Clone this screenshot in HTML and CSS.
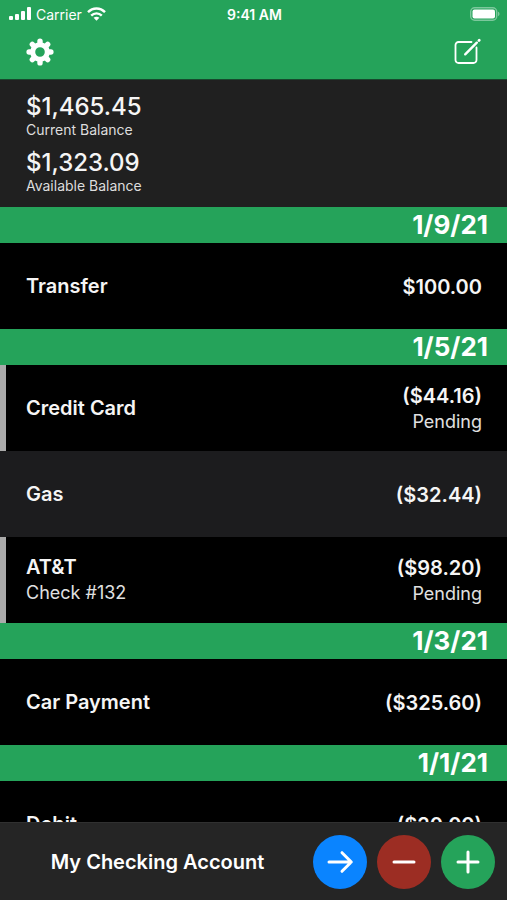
FILE: index.html
```html
<!DOCTYPE html>
<html lang="en">
<head>
    <meta charset="UTF-8">
    <meta name="viewport" content="width=device-width, initial-scale=1.0">
    <title>My Checking Account</title>
    <link rel="stylesheet" href="styles.css">
</head>
<body>
    <!-- Header -->
    <header class="header">
        <div class="status-bar">
            <div class="carrier">
                <svg width="22" height="14" viewBox="0 0 22 14" fill="#fff" aria-hidden="true">
                    <rect x="0" y="9" width="4" height="4" rx="1"/>
                    <rect x="6" y="7" width="4" height="6" rx="1"/>
                    <rect x="12" y="4" width="4" height="9" rx="1"/>
                    <rect x="18" y="0" width="4" height="13" rx="1"/>
                </svg>
                <span>Carrier</span>
                <svg width="19" height="14" viewBox="0 0 19 14" fill="none" stroke="#fff" stroke-width="2.4" aria-hidden="true">
                    <path d="M1 5.2C5.8.2 13.2.2 18 5.2"/>
                    <path d="M4.2 8.6c3-3 7.600-3 10.600 0"/>
                    <path d="M9.500 13.700L6.600 10.800c1.700-1.500 4.100-1.500 5.800 0z" fill="#fff" stroke="none"/>
                </svg>
            </div>
            <div class="time">9:41 AM</div>
            <div class="battery">
                <svg width="30" height="14" viewBox="0 0 30 14" aria-hidden="true">
                    <rect x="0.700" y="0.700" width="26" height="12.600" rx="4" fill="none" stroke="#fff" stroke-opacity="0.400" stroke-width="1.400"/>
                    <rect x="2.500" y="2.500" width="22.500" height="9" rx="2" fill="#fff"/>
                    <path d="M28 4.800c2 .6 2 3.800 0 4.400z" fill="#fff" fill-opacity="0.400"/>
                </svg>
            </div>
        </div>
        <div class="toolbar">
            <button class="icon-btn" aria-label="Settings">
                <svg width="28" height="28" viewBox="-14 -14 28 28" aria-hidden="true">
                    <g fill="none" stroke="#fff" stroke-width="5.400" stroke-linecap="round">
                        <path d="M0-10.900V-8M0 8v2.900M-10.900 0H-8M8 0h2.900"/>
                        <path d="M-7.700-7.700l2 2M5.700 5.700l2 2M7.700-7.700l-2 2M-5.700 5.700l-2 2"/>
                    </g>
                    <circle r="7.300" fill="none" stroke="#fff" stroke-width="5"/>
                </svg>
            </button>
            <button class="icon-btn" aria-label="New transaction">
                <svg width="28" height="28" viewBox="0 0 28 28" fill="none" stroke="#fff" stroke-width="1.800" stroke-linecap="round" aria-hidden="true">
                    <path d="M18.500 4H5.500a3 3 0 0 0-3 3v15a3 3 0 0 0 3 3h15a3 3 0 0 0 3-3V9.500"/>
                    <path d="M12.200 16.300L23.800 4.700" stroke-width="2.400"/>
                    <path d="M26 2.500l.2-.2" stroke-width="2.800"/>
                </svg>
            </button>
        </div>
    </header>

    <!-- Balances -->
    <section class="balances">
        <div class="balance">$1,465.45</div>
        <div class="balance-label">Current Balance</div>
        <div class="balance">$1,323.09</div>
        <div class="balance-label">Available Balance</div>
    </section>

    <!-- Transactions -->
    <main class="transactions">
        <h2 class="date">1/9/21</h2>
        <div class="transaction">
            <div class="name">Transfer</div>
            <div class="amount">$100.00</div>
        </div>

        <h2 class="date">1/5/21</h2>
        <div class="transaction pending">
            <div class="name">Credit Card</div>
            <div class="amount">($44.16)<div class="note">Pending</div></div>
        </div>
        <div class="transaction alt">
            <div class="name">Gas</div>
            <div class="amount">($32.44)</div>
        </div>
        <div class="transaction pending">
            <div class="name">AT&amp;T<div class="note">Check #132</div></div>
            <div class="amount">($98.20)<div class="note">Pending</div></div>
        </div>

        <h2 class="date">1/3/21</h2>
        <div class="transaction">
            <div class="name">Car Payment</div>
            <div class="amount">($325.60)</div>
        </div>

        <h2 class="date">1/1/21</h2>
        <div class="transaction">
            <div class="name">Debit</div>
            <div class="amount">($20.00)</div>
        </div>
    </main>

    <!-- Footer -->
    <footer class="footer">
        <div class="account">My Checking Account</div>
        <button class="round-btn transfer" aria-label="Transfer">
            <svg width="28" height="28" viewBox="0 0 28 28" aria-hidden="true">
                <path d="M3 14h22M16 4.700l9.300 9.300-9.300 9.300"/>
            </svg>
        </button>
        <button class="round-btn withdraw" aria-label="Withdraw">
            <svg width="28" height="28" viewBox="0 0 28 28" aria-hidden="true">
                <path d="M4 14h20"/>
            </svg>
        </button>
        <button class="round-btn deposit" aria-label="Deposit">
            <svg width="28" height="28" viewBox="0 0 28 28" aria-hidden="true">
                <path d="M4 14h20M14 4v20"/>
            </svg>
        </button>
    </footer>
</body>
</html>
```
FILE: styles.css
```css
/* Global Reset */
* {
    margin: 0;
    padding: 0;
    box-sizing: border-box;
}

body {
    height: 100vh;
    display: flex;
    flex-direction: column;
    overflow: hidden;
    font-family: 'Inter', sans-serif;
    background-color: #000;
    color: #fff;
}

button {
    border: none;
    background: none;
    cursor: pointer;
}

svg {
    display: block;
}

/* Header */
.header {
    flex: none;
    background-color: #25a35a;
    border-bottom: 1px solid #17492d;
}

.status-bar {
    display: grid;
    grid-template-columns: 1fr auto 1fr;
    align-items: center;
    height: 28px;
    padding: 0 7px 0 9px;
    font-size: 14px;
}

.carrier {
    display: flex;
    align-items: center;
    gap: 5px;
}

.time {
    font-weight: 600;
}

.battery {
    justify-self: end;
}

.toolbar {
    display: flex;
    justify-content: space-between;
    padding: 10px 26px 13px;
}

/* Balances */
.balances {
    flex: none;
    padding: 13px 26px 2px;
    background-color: #202020;
}

.balance {
    font-size: 24px;
    font-weight: 500;
    line-height: 28px;
    color: #f5f5f5;
}

.balance-label {
    font-size: 14px;
    line-height: 18px;
    margin-bottom: 10px;
    color: #ddd;
}

/* Transactions */
.transactions {
    flex: 1;
    min-height: 0;
    overflow: hidden;
}

.date {
    padding-right: 19px;
    font-size: 26px;
    font-weight: 700;
    line-height: 36px;
    text-align: right;
    background-color: #25a35a;
}

.transaction {
    display: flex;
    justify-content: space-between;
    align-items: center;
    height: 86px;
    padding: 0 25px 0 20px;
    border-left: 6px solid transparent;
    font-size: 20px;
    font-weight: 600;
    line-height: 26px;
    color: #f5f5f5;
}

.transaction.alt {
    background-color: #1c1c1e;
}

.transaction.pending {
    border-left-color: #aaa;
}

.amount {
    padding-top: 2px;
    text-align: right;
}

.note {
    font-size: 18px;
    font-weight: 400;
    color: #e0e0e0;
}

/* Footer */
.footer {
    flex: none;
    display: flex;
    align-items: center;
    gap: 10px;
    height: 78px;
    padding: 0 12px;
    background-color: #252525;
    border-top: 1px solid #303030;
}

.account {
    flex: 1;
    font-size: 20px;
    font-weight: 600;
    text-align: center;
}

.round-btn {
    display: flex;
    justify-content: center;
    align-items: center;
    width: 54px;
    height: 54px;
    border-radius: 50%;
}

.round-btn path {
    fill: none;
    stroke: #fff;
    stroke-width: 3;
    stroke-linecap: round;
    stroke-linejoin: round;
}

.transfer {
    background-color: #0a84ff;
}

.withdraw {
    background-color: #9c2d23;
}

.deposit {
    background-color: #25a35a;
}
```
